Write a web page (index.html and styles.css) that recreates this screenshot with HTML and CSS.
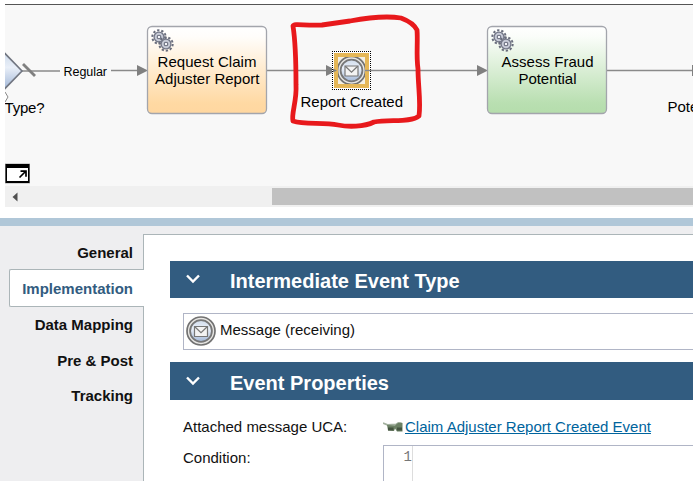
FILE: index.html
```
<!DOCTYPE html>
<html lang="en">
<head>
<meta charset="utf-8">
<title>Process designer</title>
<link rel="stylesheet" href="styles.css">
</head>
<body>
<svg class="defs" width="0" height="0" aria-hidden="true">
  <defs>
    <linearGradient id="orange" x1="0" y1="0" x2="0" y2="1"><stop offset="0" stop-color="#fff"/><stop offset=".12" stop-color="#fffdfa"/><stop offset=".88" stop-color="#ffd9a3"/><stop offset="1" stop-color="#ffd7a0"/></linearGradient>
    <linearGradient id="green" x1="0" y1="0" x2="0" y2="1"><stop offset="0" stop-color="#fff"/><stop offset=".12" stop-color="#fafdf9"/><stop offset=".88" stop-color="#b9dfb1"/><stop offset="1" stop-color="#b5ddac"/></linearGradient>
    <linearGradient id="blue" x1="0" y1="0" x2="0" y2="1"><stop offset="0" stop-color="#d0dcec"/><stop offset=".4" stop-color="#e9eff8"/><stop offset="1" stop-color="#a3b8d8"/></linearGradient>
    <symbol id="gear" viewBox="-8 -8 16 16">
      <circle r="6.7" fill="none" stroke="#696d7c" stroke-width="2" stroke-dasharray="2.3 1.91"/>
      <circle r="4.900" fill="#c6cad6" stroke="#747888" stroke-width="1.3"/>
      <circle r="1.8" fill="#f5f6fa" stroke="#6a6e7e" stroke-width="1.1"/>
    </symbol>
    <symbol id="gears" viewBox="0 0 24 24">
      <use href="#gear" x="0" y="0" width="16" height="16"/>
      <use href="#gear" x="7" y="7" width="16" height="16"/>
    </symbol>
    <symbol id="message" viewBox="0 0 30 30">
      <circle cx="15" cy="15" r="14" fill="#e8e7e4" stroke="#727272" stroke-width="1.7"/>
      <circle cx="15" cy="15" r="10.9" fill="url(#blue)" stroke="#777" stroke-width="1.8"/>
      <path d="M8.5 10.5h13v10h-13z" fill="#f3f3f3" stroke="#777" stroke-width="1.2"/>
      <path d="M8.8 10.8L15 16.6l6.2-5.8" fill="none" stroke="#777" stroke-width="1.2"/>
    </symbol>
  </defs>
</svg>

<section class="diagram">
  <svg class="canvas" viewBox="5 5 688 181" width="688" height="181">
    <g class="flow">
      <path d="M22 71H60M111 70.5H140M267 70.5H327M370 70.5H478M607 70.5H693"/>
    </g>
    <path class="slash" d="M23 64L35 76"/>
    <g class="arrow"><path d="M137 65l11 5.5-11 5.5zM326 65l11 5.5-11 5.5zM477 65l11 5.5-11 5.5zM692 65h2v11h-2z"/></g>
    <path d="M-12 71L5 53.500L22 71L5 88.500Z" fill="url(#blue)" stroke="#717681" stroke-width="1.6"/>
    <path d="M5 92l3 5-3 5" fill="#fff" stroke="#888" stroke-width="1"/>
    <text class="small" x="63.500" y="76" textLength="43.500">Regular</text>
    <text x="4.500" y="113" textLength="40">Type?</text>

    <rect class="task" x="147.500" y="26.500" width="119" height="87" rx="4.500" fill="url(#orange)"/>
    <use href="#gears" x="151" y="29" width="24" height="24"/>
    <text x="157.500" y="67" textLength="99">Request Claim</text>
    <text x="155" y="84" textLength="104.500">Adjuster Report</text>

    <rect x="332" y="51" width="39" height="39" fill="#fff"/>
    <path class="selection" d="M332 51.500H371M332 89.500H371M332.500 51V90M370.500 51V90"/>
    <rect x="334" y="53" width="35" height="35" fill="#e5b757"/>
    <rect x="338" y="57" width="27" height="27" fill="#f3efe3"/>
    <svg x="338" y="57" width="27" height="27" viewBox="1 1 27 27"><use href="#message" x="-.5" y="-.5" width="30" height="30"/></svg>
    <path class="arrow" d="M333 68.500l4 2-4 2z"/>
    <path class="flow" d="M365 70.500H371"/>
    <text x="300.500" y="107" textLength="102.500">Report Created</text>

    <rect class="task" x="487.500" y="26.500" width="119" height="87" rx="4.500" fill="url(#green)"/>
    <use href="#gears" x="491" y="29" width="24" height="24"/>
    <text x="501.500" y="67" textLength="92">Assess Fraud</text>
    <text x="518.500" y="84" textLength="58">Potential</text>
    <text x="667.500" y="112">Potential</text>

    <path class="scribble" d="M293 26C294 23 305 26 322 25L350 21C366 18 388 16 401 18C409 21 415 26 417 30C418 42 416 55 418 69C418 86 421 102 419 116C411 123 389 119 374 122C364 127 348 127 338 125C323 122 304 125 293 121C291 114 297 101 296 85C296 64 296 45 293 26Z"/>

    <path d="M5 163.500h25v20H5z" fill="#aaa"/>
    <path d="M5.500 164h24v19h-24z" fill="#000"/>
    <path d="M7 168h21v13H7z" fill="#fff"/>
    <path d="M19.500 177.500l6-6M20.500 171.200h5.500v5.500" fill="none" stroke="#000" stroke-width="1.7"/>
  </svg>
  <div class="scrollbar"><svg width="6" height="10" viewBox="0 0 6 10"><path d="M5.500 .5v9L.5 5z" fill="#505050"/></svg><span class="thumb"></span></div>
</section>

<div class="splitter"></div>

<section class="properties">
  <nav class="tabs">
    <a class="tab">General</a>
    <a class="tab active">Implementation</a>
    <a class="tab">Data Mapping</a>
    <a class="tab">Pre &amp; Post</a>
    <a class="tab">Tracking</a>
  </nav>
  <div class="panel">
    <h2 class="heading"><svg width="16" height="12" viewBox="0 0 16 12"><path d="M2 2.500l6 6 6-6"/></svg>Intermediate Event Type</h2>
    <div class="select"><svg width="30" height="30"><use href="#message" width="30" height="30"/></svg><span>Message (receiving)</span></div>
    <h2 class="heading second"><svg width="16" height="12" viewBox="0 0 16 12"><path d="M2 2.500l6 6 6-6"/></svg>Event Properties</h2>
    <div class="form">
      <span class="label">Attached message UCA:</span>
      <span class="value"><svg width="21" height="11" viewBox="0 0 21 11"><path d="M0 1l5 2 8-.5 3-2 3 1" fill="none" stroke="#a3b19f" stroke-width="1.8"/><path d="M4 3l8 .5 3-2.500h4.500v8.500h-5.500l-2-3-1 2.500-6-.5z" fill="#6b8064"/><path d="M5 5.500h5.500v3H5zM14 5.500h5v3h-5z" fill="#43533f"/></svg><a class="link">Claim Adjuster Report Created Event</a></span>
      <span class="label">Condition:</span>
      <div class="editor"><span class="gutter">1</span></div>
    </div>
  </div>
</section>
</body>
</html>
```
FILE: styles.css
```
* { box-sizing: border-box; }
body {
  margin: 0;
  width: 693px;
  height: 481px;
  overflow: hidden;
  background: #fff;
  color: #111;
  font: 15px/17px "Liberation Sans", Arial, sans-serif;
  display: flex;
  flex-direction: column;
}
svg { display: block; flex: none; }
.defs { position: absolute; }

.diagram { margin: 4px 0 11px 5px; border-top: 1px solid #555; background: #f8f8f8; }
.canvas text { font-size: 15px; fill: #000; }
.canvas .small { font-size: 12.5px; }
.flow { stroke: #8a8a8a; stroke-width: 1.4; }
.arrow { fill: #808080; }
.slash { stroke: #808080; stroke-width: 2.8; }
.task { stroke: #a3a5ac; stroke-width: 1.3; }
.selection { stroke: #000; stroke-width: 1; stroke-dasharray: 1 1; shape-rendering: crispEdges; }
.scribble { fill: none; stroke: #e8191c; stroke-width: 4.8; stroke-linejoin: round; }
.scrollbar { display: flex; align-items: center; height: 21px; padding-left: 7px; background: #f0f0f0; }
.thumb { flex: 1; height: 17px; margin-left: 254px; background: #c1c1c1; }

.splitter { height: 8px; flex: none; background: #b0c7d8; }

.properties { display: flex; flex: 1; background: #eeeef0; padding-top: 8px; }
.tabs { z-index: 1; width: 144px; padding: 0 0 0 9px; flex: none; display: flex; flex-direction: column; border-right: 1px solid #abb5b8; }
.tab { height: 36px; padding: 1px 10px 0 0; line-height: 36px; text-align: right; font-weight: bold; }
.tab.active {
  height: 38px;
  margin: -1px -1px -1px 0;
  padding: 0 11px 0 0;
  line-height: 38px;
  border: 1px solid #abb5b8;
  border-right: 0;
  border-radius: 2px 0 0 2px;
  background: #fff;
  color: #325c80;
}
.tab:last-child { padding-top: 0; }
.panel { flex: 1; margin-left: -1px; padding: 26px 0 0 27px; background: #fff; border-top: 1px solid #abb5b8; }
.heading {
  display: flex;
  align-items: center;
  gap: 29px;
  height: 37px;
  margin: 0;
  padding: 2px 0 0 15px;
  background: #325c80;
  color: #fff;
  font-size: 20px;
  line-height: 24px;
}
.heading svg { margin-top: -3px; }
.heading path { fill: none; stroke: #fff; stroke-width: 2.4; }
.heading.second { height: 38px; padding-top: 3px; }
.select {
  display: flex;
  gap: 4px;
  height: 37px;
  margin: 15px -1px 12px 13px;
  padding: 2px;
  border: 1px solid #b0b5c6;
}
.select span { padding-top: 5px; }
.form { display: grid; grid-template-columns: 200px 1fr; grid-template-rows: 27px 60px; margin: 18px -1px 0 13px; }
.value { display: flex; gap: 1px; }
.value svg { margin-top: 4px; }
.link { color: #00649d; text-decoration: underline; }
.form .label:nth-of-type(3) { padding-top: 4px; }
.editor { border: 1px solid #b0b5c6; }
.gutter {
  display: block;
  width: 29px;
  height: 58px;
  padding-top: 3px;
  border-right: 1px solid #ddd;
  background: #fff;
  color: #777;
  text-align: right;
  font-family: "Liberation Mono", monospace;
  font-size: 14px;
}
```
